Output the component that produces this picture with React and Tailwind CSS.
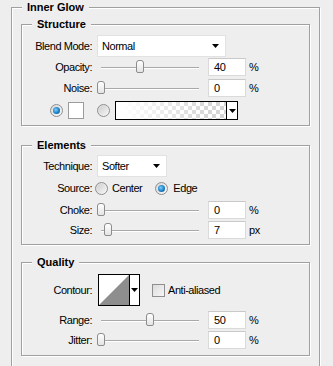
import React from "react";

const FONT = { fontFamily: '"Liberation Sans", Arial, sans-serif' };

function Group({ title, className = "", children }) {
  return (
    <div
      className={`border border-[#a0a0a0] shadow-[1px_1px_0_#fff,inset_1px_1px_0_#fff] ${className}`}
    >
      <div className="-mt-[7px] ml-[10px] w-fit bg-[#eeeeee] px-[5px] text-[11px] font-bold leading-[13px] tracking-normal text-black">
        {title}
      </div>
      {children}
    </div>
  );
}

function Label({ children }) {
  return (
    <div className="w-[70px] shrink-0 text-right leading-[13px]">{children}</div>
  );
}

function Arrow() {
  return (
    <svg width="7" height="4" viewBox="0 0 7 4" className="block">
      <path d="M0 0H7L3.5 4Z" fill="#000" />
    </svg>
  );
}

function Dropdown({ value, width }) {
  return (
    <div
      className="ml-[5px] flex h-[22px] items-center justify-between border border-[#e2e2e2] bg-white pl-[4px] pr-[6px]"
      style={{ width }}
    >
      <span className="leading-[13px]">{value}</span>
      <Arrow />
    </div>
  );
}

function Thumb({ left }) {
  return (
    <div
      className="absolute top-[2px] h-[13px] w-[8px] rounded-t-[3px] rounded-b-[2px] border border-[#8d8d8d] bg-[linear-gradient(to_bottom,#ffffff,#e4e4e4)]"
      style={{ left }}
    />
  );
}

function Slider({ pos }) {
  return (
    <div className="relative h-[18px] w-[116px] shrink-0">
      <div className="absolute left-[9px] top-[9px] h-[2px] w-[98px] border-t border-[#a9a9a9] bg-white" />
      <Thumb left={9 + pos - 4} />
    </div>
  );
}

function Input({ value }) {
  return (
    <div className="flex h-[18px] w-[38px] shrink-0 items-center border border-[#dadada] border-t-[#c9c9c9] bg-white pl-[5px] leading-[13px]">
      {value}
    </div>
  );
}

function SliderRow({ label, pos, value, unit, className = "" }) {
  return (
    <div className={`flex h-[18px] items-center ${className}`}>
      <Label>{label}</Label>
      <Slider pos={pos} />
      <Input value={value} />
      <span className="ml-[3px] leading-[13px]">{unit}</span>
    </div>
  );
}

function Radio({ checked, className = "" }) {
  return (
    <div
      className={`flex h-[13px] w-[13px] shrink-0 items-center justify-center rounded-full border border-[#8f8f8f] bg-[linear-gradient(135deg,#d8d8d8,#f8f8f8)] ${className}`}
    >
      {checked ? (
        <div className="h-[7px] w-[7px] rounded-full bg-[radial-gradient(circle_at_40%_40%,#7fd0ff,#1a7ec6_55%,#0b4f8a)]" />
      ) : (
        <div className="h-[9px] w-[9px] rounded-full bg-[linear-gradient(135deg,#cfcfcf,#f4f4f4)]" />
      )}
    </div>
  );
}

export default function App() {
  return (
    <div
      className="h-[366px] w-[333px] overflow-hidden bg-[#eeeeee] pl-[11px] pt-[7px] text-[11px] tracking-[-0.45px] text-black"
      style={FONT}
    >
      <Group title="Inner Glow" className="h-[380px] w-[309px]">
        {/* Structure */}
        <Group title="Structure" className="ml-[9px] mt-[10px] w-[289px] pb-[5px]">
          <div className="mt-[4px] flex h-[22px] items-center">
            <Label>Blend Mode:</Label>
            <Dropdown value="Normal" width={129} />
          </div>
          <SliderRow label="Opacity:" pos={39} value="40" unit="%" className="mt-[1px]" />
          <SliderRow label="Noise:" pos={0} value="0" unit="%" className="mt-[3px]" />
          <div className="mt-[4px] flex h-[19px] items-center">
            <Radio checked className="ml-[28px]" />
            <div className="ml-[5px] h-[17px] w-[16px] border border-[#9c9c9c] bg-white" />
            <Radio className="ml-[13px]" />
            <div className="ml-[5px] flex h-[19px] w-[123px] border border-black">
              <div className="h-full flex-1 [background:linear-gradient(to_right,#ffffff_5%,rgba(255,255,255,0)_85%),repeating-conic-gradient(#d6d6d6_0%_25%,#ffffff_0%_50%)_0_0/8px_8px]" />
              <div className="flex h-full w-[11px] items-center justify-center border-l border-black bg-white">
                <Arrow />
              </div>
            </div>
          </div>
        </Group>

        {/* Elements */}
        <Group title="Elements" className="ml-[9px] mt-[19px] w-[289px] pb-[5px]">
          <div className="mt-[3px] flex h-[22px] items-center">
            <Label>Technique:</Label>
            <Dropdown value="Softer" width={70} />
          </div>
          <div className="mt-[2px] flex h-[19px] items-center">
            <Label>Source:</Label>
            <Radio className="ml-[3px]" />
            <span className="ml-[4px] leading-[13px]">Center</span>
            <Radio checked className="ml-[13px]" />
            <span className="ml-[5px] leading-[13px]">Edge</span>
          </div>
          <SliderRow label="Choke:" pos={0} value="0" unit="%" className="mt-[3px]" />
          <SliderRow label="Size:" pos={7} value="7" unit="px" className="mt-[2px]" />
        </Group>

        {/* Quality */}
        <Group title="Quality" className="ml-[9px] mt-[17px] w-[289px] pb-[6px]">
          <div className="mt-[5px] flex h-[32px] items-center">
            <Label>Contour:</Label>
            <div className="ml-[6px] flex h-[32px] w-[42px] border border-black bg-white">
              <svg width="30" height="30" viewBox="0 0 30 30" className="block">
                <rect width="30" height="30" fill="#fff" />
                <path d="M0 30L30 0V30Z" fill="#8e8e8e" />
              </svg>
              <div className="flex h-full flex-1 items-center justify-center border-l border-black bg-white">
                <Arrow />
              </div>
            </div>
            <div className="ml-[12px] h-[13px] w-[13px] border border-[#8f8f8f] bg-[linear-gradient(135deg,#dcdcdc,#f6f6f6)]" />
            <span className="ml-[3px] leading-[13px]">Anti-aliased</span>
          </div>
          <SliderRow label="Range:" pos={49} value="50" unit="%" className="mt-[5px]" />
          <SliderRow label="Jitter:" pos={0} value="0" unit="%" className="mt-[2px]" />
        </Group>
      </Group>
    </div>
  );
}
